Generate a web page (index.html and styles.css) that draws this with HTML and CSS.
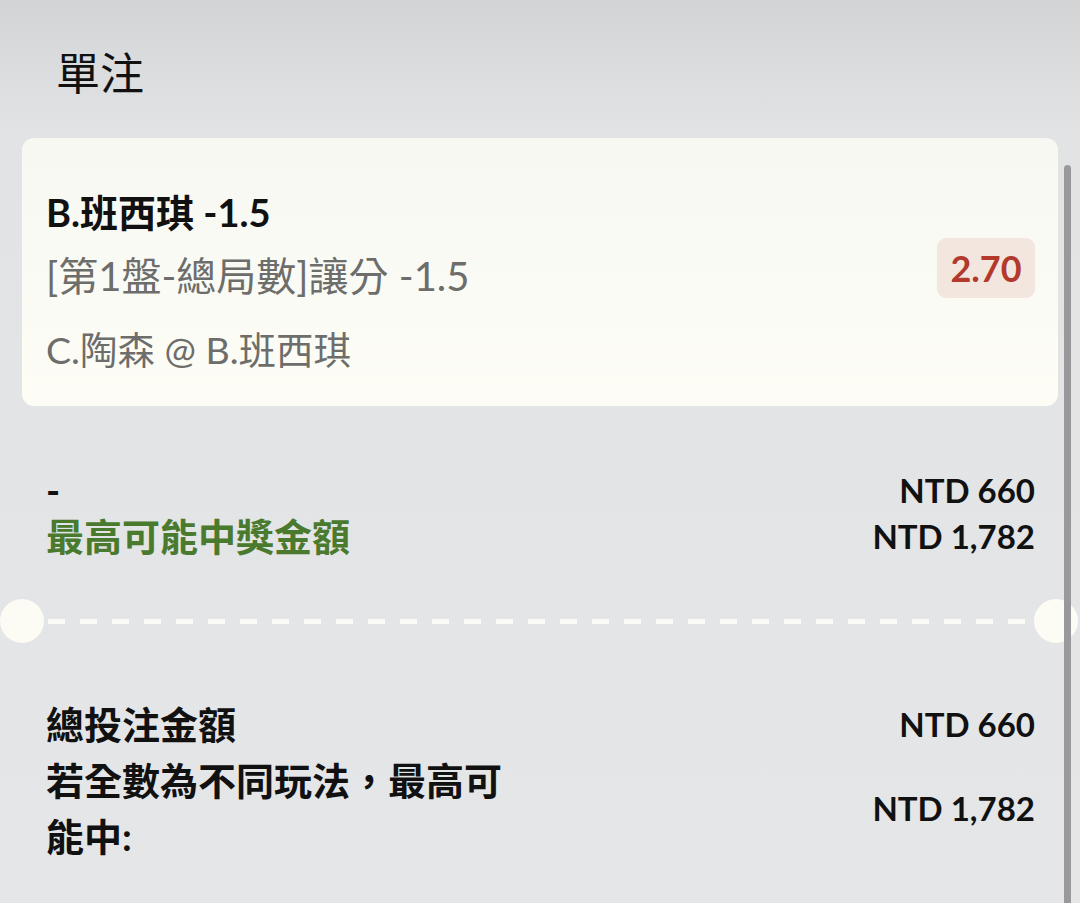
FILE: index.html
```html
<!DOCTYPE html>
<html lang="zh-Hant">
<head>
<meta charset="UTF-8">
<title>單注</title>
<link rel="stylesheet" href="styles.css">
</head>
<body>
    <div class="sheet">
        <h1 class="sheet-title">單注</h1>

        <div class="bet-card">
            <div class="bet-info">
                <div class="bet-pick">B.班西琪 -1.5</div>
                <div class="bet-market">[第1盤-總局數]讓分 -1.5</div>
                <div class="bet-event">C.陶森 @ B.班西琪</div>
            </div>
            <div class="odds">2.70</div>
        </div>

        <div class="summary first">
            <div class="row">
                <span class="label">-</span>
                <span class="amount">NTD 660</span>
            </div>
            <div class="row">
                <span class="label win">最高可能中獎金額</span>
                <span class="amount">NTD 1,782</span>
            </div>
        </div>

        <div class="divider"></div>

        <div class="summary totals">
            <div class="row">
                <span class="label">總投注金額</span>
                <span class="amount">NTD 660</span>
            </div>
            <div class="row">
                <span class="label wrap">若全數為不同玩法，最高可能中:</span>
                <span class="amount">NTD 1,782</span>
            </div>
        </div>

        <div class="scrollbar"></div>
    </div>
</body>
</html>
```

FILE: styles.css
```css
html, body {
    margin: 0;
    height: 100%;
}
body {
    font-family: 'Lato', 'Noto Sans CJK TC', sans-serif;
    background: linear-gradient(180deg, #d3d4d6 0px, #e2e3e5 130px, #e5e6e8 100%);
    color: #111;
    overflow: hidden;
}
.sheet {
    position: relative;
    height: 100%;
    overflow: hidden;
}
.sheet-title {
    margin: 0;
    padding: 43px 0 0 56px;
    height: 138px;
    box-sizing: border-box;
    font-family: 'Noto Sans CJK TC', sans-serif;
    font-size: 44px;
    font-weight: 400;
    line-height: 56px;
}
.bet-card {
    margin: 0 22px;
    padding: 52px 23px 24px 24px;
    background: linear-gradient(180deg, #f8f8f3, #fdfdf6);
    border-radius: 12px;
    display: flex;
    align-items: center;
    justify-content: space-between;
}
.bet-pick {
    font-size: 38px;
    font-weight: 700;
    line-height: 44px;
    margin-bottom: 10px;
}
.bet-market,
.bet-event {
    font-size: 37.5px;
    line-height: 64px;
    color: #6d6d6b;
}
.bet-market {
    font-size: 40px;
}
.bet-event {
    margin-top: 10px;
}
.odds {
    margin-top: -36px;
    width: 98px;
    height: 60px;
    border-radius: 9px;
    background: #f3e6df;
    color: #b2392b;
    font-size: 36px;
    font-weight: 700;
    line-height: 60px;
    text-align: center;
}
.summary {
    padding: 0 45px 0 46px;
}
.summary.first {
    margin-top: 61px;
}
.row {
    display: flex;
    justify-content: space-between;
    align-items: center;
}
.first .row {
    height: 46px;
}
.label {
    font-size: 38px;
    font-weight: 700;
    line-height: 46px;
}
.label.win {
    color: #4a7a2d;
}
.amount {
    font-size: 33px;
    font-weight: 700;
}
.totals {
    margin-top: 72px;
}
.totals .label {
    line-height: 56px;
}
.label.wrap {
    flex: 0 0 480px;
}
.divider {
    position: relative;
    margin: 60px 48px 0 48px;
    height: 5px;
    background: repeating-linear-gradient(90deg, #fbfbf5 0, #fbfbf5 17px, transparent 17px, transparent 32px);
}
.divider::before,
.divider::after {
    content: '';
    position: absolute;
    top: -20px;
    width: 44px;
    height: 44px;
    border-radius: 50%;
    background: #fcfcf5;
}
.divider::before {
    left: -48px;
}
.divider::after {
    right: -46px;
}
.scrollbar {
    position: absolute;
    top: 165px;
    bottom: -8px;
    left: 1064px;
    width: 7px;
    border-radius: 4px;
    background: #99999b;
}
```
